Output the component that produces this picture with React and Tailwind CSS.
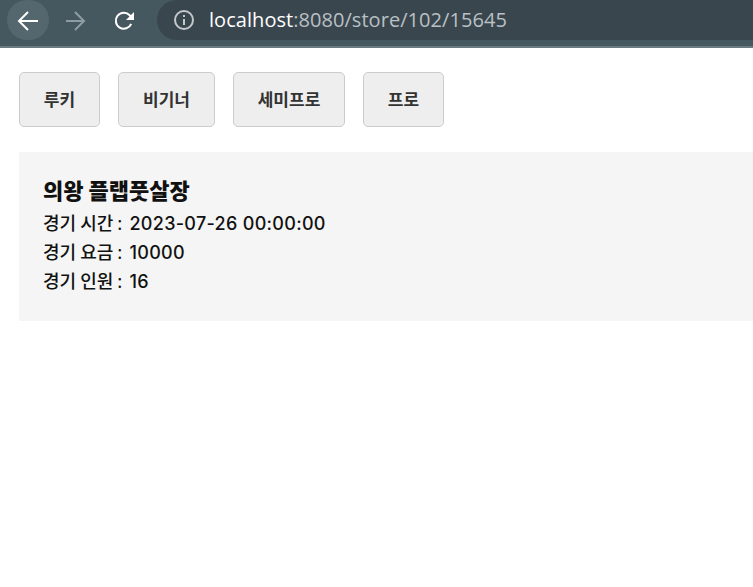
const LEVELS = ["루키", "비기너", "세미프로", "프로"];
const LEVEL_WIDTHS = ["w-[81px]", "w-[97px]", "w-[112px]", "w-[81px]"];

const INFO = [
  { label: "경기 시간", value: "2023-07-26 00:00:00" },
  { label: "경기 요금", value: "10000" },
  { label: "경기 인원", value: "16" },
];

function BrowserBar() {
  return (
    <div className="h-[48px] flex items-start bg-[#46585f] border-b-2 border-[#6b7b80] font-['Open_Sans','Noto_Sans',sans-serif]">
      <div className="w-[42px] h-[40px] ml-[7px] rounded-full bg-[#54666e] flex items-center justify-center">
        <svg width="24" height="24" viewBox="0 0 24 24" fill="none" stroke="#ffffff" strokeWidth="2">
          <path d="M22 13H4M12 4l-9 9 9 9" />
        </svg>
      </div>
      <div className="w-[40px] h-[40px] ml-[6px] flex items-center justify-center">
        <svg width="24" height="24" viewBox="0 0 24 24" fill="none" stroke="#8f9ca1" strokeWidth="2">
          <path d="M3 13h17M12 4l9 9-9 9" />
        </svg>
      </div>
      <div className="w-[40px] h-[40px] ml-[9px] flex items-center justify-center">
        <svg width="24" height="24" viewBox="0 0 24 24" fill="none">
          <path d="M19.2 15.8A8 8 0 1 1 17.7 7.3L20 9.5" stroke="#ffffff" strokeWidth="2" />
          <path d="M22 4v8h-8z" fill="#ffffff" />
        </svg>
      </div>
      <div className="flex-1 ml-[13px] h-[40px] rounded-l-[20px] bg-[#3a464e] flex items-center pl-[16px]">
        <svg width="22" height="22" viewBox="0 0 22 22" fill="none" stroke="#c3c8cb" strokeWidth="2">
          <circle cx="11" cy="11" r="9" />
          <path d="M11 10v6M11 6v2" />
        </svg>
        <div className="ml-[14px] text-[20px] leading-[24px] text-[#b9c0c4] whitespace-nowrap tracking-[0.05px]">
          <span className="text-white">localhost</span>:8080/store/102/15645
        </div>
      </div>
    </div>
  );
}

export default function App() {
  return (
    <div className="min-h-[587px] bg-white font-['Noto_Sans_CJK_KR','Inter',sans-serif]">
      <BrowserBar />
      <div className="pl-[19px] pt-[24px]">
        <div className="flex gap-[18px]">
          {LEVELS.map((level, i) => (
            <button
              key={level}
              className={`${LEVEL_WIDTHS[i]} h-[55px] rounded-[5px] border border-[#cccccc] bg-[#eeeeee] text-[17px] font-bold text-[#333333] pb-[2px]`}
            >
              {level}
            </button>
          ))}
        </div>
        <div className="mt-[25px] h-[169px] bg-[#f5f5f5] pl-[24px] pt-[23px] text-[#111111]">
          <div className="text-[22px] leading-[28px] font-black">의왕 플랩풋살장</div>
          <div className="mt-[5px] flex flex-col">
            {INFO.map((row) => (
              <div key={row.label} className="h-[29px] text-[18px] leading-[28px] font-medium whitespace-nowrap">
                {row.label} <span className="font-normal">:</span>{" "}
                <span className="font-['Inter','Noto_Sans_CJK_KR',sans-serif] text-[18px] tracking-[0.3px] ml-[3px]">{row.value}</span>
              </div>
            ))}
          </div>
        </div>
      </div>
    </div>
  );
}
